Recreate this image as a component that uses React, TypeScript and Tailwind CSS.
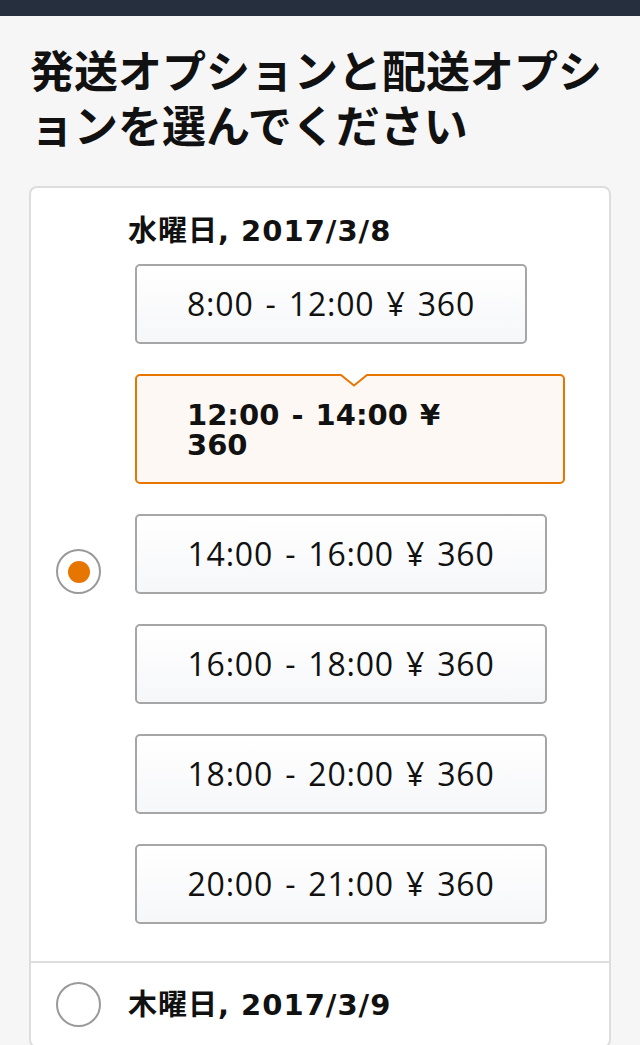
import React from "react";

const slots = [
  { label: "8:00 - 12:00 ¥ 360", w: "w-[392px]" },
  { label: "12:00 - 14:00 ¥ 360", selected: true },
  { label: "14:00 - 16:00 ¥ 360", w: "w-[412px]" },
  { label: "16:00 - 18:00 ¥ 360", w: "w-[412px]" },
  { label: "18:00 - 20:00 ¥ 360", w: "w-[412px]" },
  { label: "20:00 - 21:00 ¥ 360", w: "w-[412px]" },
];

function Radio({ checked }: { checked?: boolean }) {
  return (
    <div className="w-[45px] h-[45px] shrink-0 rounded-full border-2 border-[#9a9a9a] bg-white flex items-center justify-center">
      {checked && <div className="w-[22px] h-[22px] rounded-full bg-[#e77600]" />}
    </div>
  );
}

export default function App() {
  return (
    <div className="min-h-[1045px] bg-[#f6f6f6] text-[#111] font-['Noto_Sans_CJK_JP','Noto_Sans',sans-serif]">
      <div className="h-4 bg-[#252f3e]" />
      <div className="px-[29px] pt-[26px]">
        <h1 className="pl-[1px] text-[44px] leading-[55px] font-bold">
          発送オプションと配送オプションを選んでください
        </h1>
        <div className="mt-[34px] bg-white border-2 border-[#dddddd] rounded-[8px]">
          <div className="flex items-center pl-[25px] pt-[25px] pb-[37px] border-b-2 border-[#dddddd]">
            <div className="mt-[6px]">
              <Radio checked />
            </div>
            <div className="ml-[27px]">
              <div className="text-[29px] leading-[36px] font-bold tracking-[1px] font-['DejaVu_Sans','Noto_Sans_CJK_JP',sans-serif]">
                水曜日, 2017/3/8
              </div>
              <div className="ml-[7px] mt-[15px] flex flex-col gap-[30px]">
                {slots.map((s) =>
                  s.selected ? (
                    <div
                      key={s.label}
                      className="relative w-[430px] h-[110px] rounded-[5px] border-2 border-[#e77600] bg-[#fdf8f3] flex items-center pl-[50px] text-[29px] leading-[30px] font-bold [word-spacing:2px] font-['DejaVu_Sans',sans-serif]"
                    >
                      <svg
                        className="absolute top-[-2px] left-[204px]"
                        width="26"
                        height="13"
                        viewBox="0 0 26 13"
                      >
                        <polygon points="0,0 26,0 13,11" fill="#ffffff" />
                        <polyline
                          points="0,1 13,11.5 26,1"
                          fill="none"
                          stroke="#e77600"
                          strokeWidth="2"
                        />
                      </svg>
                      <span className="pt-[2px]">
                        12:00 - 14:00 ¥
                        <br />
                        360
                      </span>
                    </div>
                  ) : (
                    <div
                      key={s.label}
                      className={`${s.w} h-[80px] rounded-[5px] border-2 border-[#a6a6a6] bg-linear-to-b from-white to-[#f6f7f9] flex items-center justify-center text-[32px] tracking-[0.8px] [word-spacing:3px] font-normal font-['Open_Sans',sans-serif]`}
                    >
                      {s.label}
                    </div>
                  )
                )}
              </div>
            </div>
          </div>
          <div className="flex items-center pl-[25px] pt-[19px] pb-[19px]">
            <Radio />
            <div className="ml-[27px] text-[29px] leading-[36px] font-bold tracking-[1px] font-['DejaVu_Sans','Noto_Sans_CJK_JP',sans-serif]">
              木曜日, 2017/3/9
            </div>
          </div>
        </div>
      </div>
    </div>
  );
}
